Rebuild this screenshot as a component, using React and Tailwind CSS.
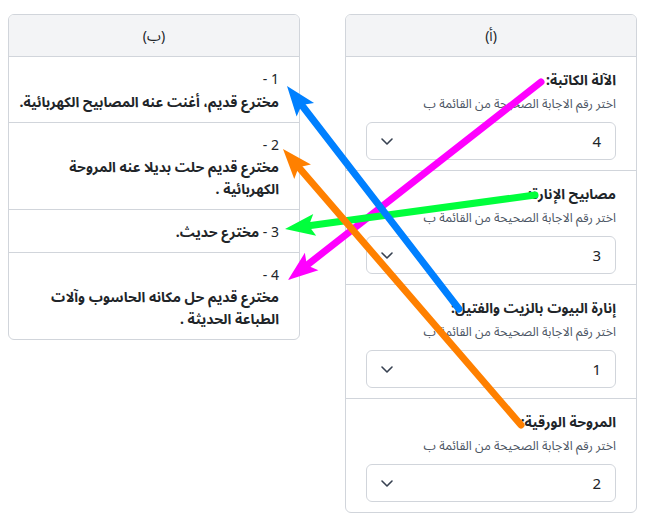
import React from "react";

const rightItems = [
  { title: "الآلة الكاتبة:", value: "4" },
  { title: "مصابيح الإنارة:", value: "3" },
  { title: "إنارة البيوت بالزيت والفتيل:", value: "1" },
  { title: "المروحة الورقية:", value: "2" },
];

const leftItems = [
  { n: "1", text: "مخترع قديم، أغنت عنه المصابيح الكهربائية." },
  { n: "2", text: "مخترع قديم حلت بديلا عنه المروحة الكهربائية ." },
  { n: "3", text: "مخترع حديث." },
  { n: "4", text: "مخترع قديم حل مكانه الحاسوب وآلات الطباعة الحديثة ." },
];

const font = {
  fontFamily: '"Noto Sans", "Noto Sans Arabic", "DejaVu Sans", sans-serif',
};

function Chevron() {
  return (
    <svg width="16" height="16" viewBox="0 0 16 16" fill="none">
      <path d="M3 6 L8 11 L13 6" stroke="#374151" strokeWidth="1.6" strokeLinecap="round" strokeLinejoin="round" />
    </svg>
  );
}

function Arrow({ x1, y1, x2, y2, color }) {
  const dx = x2 - x1;
  const dy = y2 - y1;
  const len = Math.sqrt(dx * dx + dy * dy);
  const ux = dx / len;
  const uy = dy / len;
  const px = -uy;
  const py = ux;
  const L = 30;
  const W = 11;
  const N = 6;
  const bx = x2 - ux * L;
  const by = y2 - uy * L;
  const nx = x2 - ux * (L - N);
  const ny = y2 - uy * (L - N);
  const pts = [
    [x2, y2],
    [bx + px * W, by + py * W],
    [nx, ny],
    [bx - px * W, by - py * W],
  ]
    .map((p) => p.join(","))
    .join(" ");
  return (
    <g>
      <line x1={x1} y1={y1} x2={nx} y2={ny} stroke={color} strokeWidth="7" strokeLinecap="round" />
      <polygon points={pts} fill={color} />
    </g>
  );
}

export default function App() {
  return (
    <div className="relative w-[645px] h-[529px] bg-white" style={font}>
      <div dir="rtl" className="flex items-start gap-[45px] px-2 pt-[14px]">
        <div className="w-[292px] border border-[#d1d5db] rounded-md overflow-hidden">
          <div className="h-[42px] bg-[#f3f4f6] border-b border-[#d1d5db] flex items-center justify-center text-[14px] text-[#212529]">
            (أ)
          </div>
          {rightItems.map((it, i) => (
            <div
              key={i}
              className={
                "px-5 pt-3 pb-[10px] " +
                (i < rightItems.length - 1 ? "border-b border-[#d1d5db]" : "")
              }
            >
              <div className="text-[14px] font-bold leading-[22px] text-[#212529]">{it.title}</div>
              <div className="mt-[3px] text-[12.5px] leading-5 text-[#4b5563]">
                اختر رقم الاجابة الصحيحة من القائمة ب
              </div>
              <div className="mt-2 h-[38px] border border-[#d1d5db] rounded-md flex items-center justify-between pr-[14px] pl-3 text-[15px] text-[#212529]">
                <span>{it.value}</span>
                <Chevron />
              </div>
            </div>
          ))}
        </div>
        <div className="w-[292px] border border-[#d1d5db] rounded-md overflow-hidden">
          <div className="h-[42px] bg-[#f3f4f6] border-b border-[#d1d5db] flex items-center justify-center text-[14px] text-[#212529]">
            (ب)
          </div>
          {leftItems.map((it, i) => (
            <div
              key={i}
              className={
                "pr-5 pl-1 pt-[10px] pb-[9px] leading-[22px] text-[#212529] " +
                (i < leftItems.length - 1 ? "border-b border-[#d1d5db]" : "")
              }
            >
              <span className="text-[14px]">{it.n} - </span>
              <span className="inline-block text-[14px] font-bold">{it.text}</span>
            </div>
          ))}
        </div>
      </div>
      <svg className="absolute inset-0 pointer-events-none" width="645" height="529">
        <Arrow x1={541} y1={82} x2={288} y2={280} color="#ff00ff" />
        <Arrow x1={535} y1={195} x2={285} y2={229} color="#00ff3c" />
        <Arrow x1={459} y1={309} x2={287} y2={86} color="#0080ff" />
        <Arrow x1={521} y1={425} x2={283} y2={149} color="#ff8000" />
      </svg>
    </div>
  );
}
